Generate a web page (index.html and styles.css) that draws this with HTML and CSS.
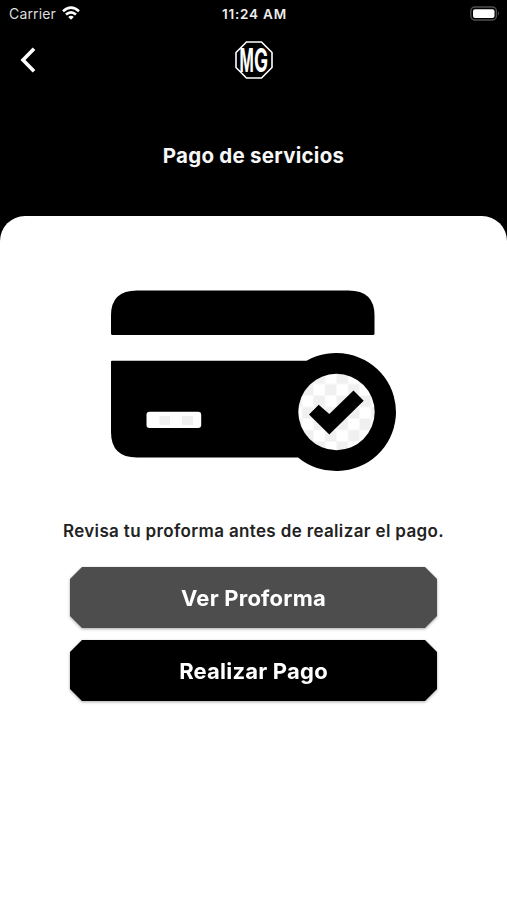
FILE: index.html
```html
<!DOCTYPE html>
<html lang="es">
<head>
<meta charset="utf-8">
<title>Pago de servicios</title>
<link rel="stylesheet" href="styles.css">
</head>
<body>
<div class="screen">
  <header class="header">
    <div class="status">
      <div class="carrier"><span>Carrier</span>
        <svg width="18" height="14" viewBox="0 0 18 14" fill="none" stroke="#fff" stroke-width="2.6"><path d="M1 5.2Q9-2 17 5.2M4 8.500Q9 4.100 14 8.500"/><path d="M6.200 11Q9 8.600 11.800 11L9 13.700Z" fill="#fff" stroke="none"/></svg>
      </div>
      <span class="time">11:24 AM</span>
      <svg class="battery" width="30" height="16" viewBox="0 0 30 16"><rect x=".8" y="1" width="25.6" height="13" rx="4" fill="#000" stroke="#505050" stroke-width="1.4"/><rect x="3" y="3.2" width="21.5" height="8.8" rx="2" fill="#fff"/><path d="M28 5.2q2 2.3 0 4.6z" fill="#505050"/></svg>
    </div>
    <nav class="nav">
      <svg class="back" width="16" height="26" viewBox="0 0 16 26" fill="none" stroke="#fff" stroke-width="3.6"><path d="M14 1.8 3 13 14 24.2"/></svg>
      <svg class="logo" width="38" height="38" viewBox="0 0 38 38"><path d="M11.500 1h15L37 11.500v15L26.500 37h-15L1 26.500v-15z" fill="none" stroke="#fff" stroke-width="1.600"/><text class="logo-text" transform="translate(4.600 30.800) scale(.51 1.080)" textLength="28" lengthAdjust="spacingAndGlyphs">M</text><text class="logo-text" transform="translate(19 30.800) scale(.54 1.080)" textLength="26" lengthAdjust="spacingAndGlyphs">G</text></svg>
    </nav>
    <h1>Pago de servicios</h1>
  </header>
  <main class="sheet">
    <svg class="card" width="290" height="184" viewBox="109 289 290 184">
      <defs><pattern id="checks" width="23" height="23" x="313.500" y="372.500" patternUnits="userSpaceOnUse"><path d="M0 0h23v23H0z" fill="#fff"/><path d="M0 0h11.500v11.500H0zM11.500 11.500H23V23H11.500z" fill="#f0f0f0"/></pattern></defs>
      <path d="M111 333.500V315.500Q111 290.500 137 290.500H348.500Q374.500 290.500 374.500 315.500V333.500Q374.500 335 373 335H112.500Q111 335 111 333.500ZM112 360.700H306.500A59.800 59.100 0 1 1 298 457.500H137Q111 457.500 111 432V361.700Q111 360.700 112 360.700Z"/>
      <rect x="146.500" y="411.800" width="54.700" height="16.200" rx="3" fill="#fff"/>
      <path d="M159.500 416h10.500v9h-10.500zM182 416h11v9h-11z" fill="#f0f0f0"/>
      <circle cx="336.500" cy="412" r="38.200" fill="url(#checks)"/>
      <path d="m309 414.500 9.700-9.800 10.600 9.200 24.200-23.400 10.200 10.300-34.400 33.600z"/>
    </svg>
    <p>Revisa tu proforma antes de realizar el pago.</p>
    <div class="actions">
      <div class="lift"><button class="btn gray">Ver Proforma</button></div>
      <div class="lift"><button class="btn">Realizar Pago</button></div>
    </div>
  </main>
</div>
</body>
</html>
```

FILE: styles.css
```css
* { box-sizing: border-box; }
body { margin: 0; background: #000; font-family: Inter, "Liberation Sans", sans-serif; }
svg { display: block; }
.screen { height: 900px; display: flex; flex-direction: column; background: #000; color: #fff; overflow: hidden; }
.header { height: 216px; flex: none; }
.status { height: 28px; padding: 0 7px 0 9px; display: grid; grid-template-columns: 1fr auto 1fr; align-items: center; font-size: 14px; }
.carrier { display: flex; align-items: center; gap: 6px; margin-top: -1px; color: #ddd; letter-spacing: .15px; }
.carrier svg { margin-top: -1px; }
.time { font-size: 13.5px; font-weight: 600; letter-spacing: .8px; color: #eee; }
.battery { justify-self: end; margin-top: -1px; }
.nav { height: 64px; padding: 0 20px; display: grid; grid-template-columns: 1fr auto 1fr; align-items: center; }
.logo { overflow: visible; }
.logo-text { font: 700 30px Inter, "Liberation Sans", sans-serif; fill: #fff; }
h1 { margin: 49px 0 0; text-align: center; font-size: 20.5px; line-height: 30px; font-weight: 700; letter-spacing: .25px; color: #f7f7f7; }
.sheet { flex: 1; background: #fff; border-radius: 25px 25px 0 0; padding-top: 73px; display: flex; flex-direction: column; align-items: center; }
.card { flex: none; }
p { margin: 46px 0 0; line-height: 24px; font-size: 17px; font-weight: 600; letter-spacing: .35px; color: #222; white-space: nowrap; }
.actions { margin-top: 24px; display: flex; flex-direction: column; gap: 12px; }
.lift { filter: drop-shadow(0 1.5px 1.5px rgba(0,0,0,.35)); }
.btn { display: block; width: 367px; height: 61px; border: 0; padding: 0; background: #000; color: #fff; font: 700 22px Inter, "Liberation Sans", sans-serif; letter-spacing: .22px; clip-path: polygon(12px 0, 355px 0, 100% 12px, 100% 49px, 355px 100%, 12px 100%, 0 49px, 0 12px); }
.gray { background: #4d4d4d; }
```
